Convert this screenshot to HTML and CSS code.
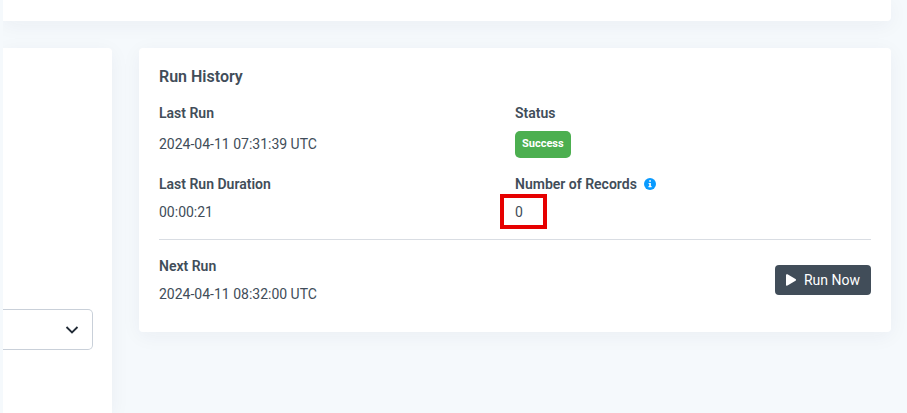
FILE: index.html
```html
<!DOCTYPE html>
<html lang="en">

	<head>
		<meta charset="UTF-8">
		<title>Run History</title>
		<link rel="stylesheet" href="styles.css">
	</head>

	<body>
		<main class="page">
			<div class="card top-card"></div>

			<div class="columns">
				<!-- settings -->
				<div class="card side-card">
					<div class="select-wrap">
						<select class="select" aria-label="Schedule">
							<option></option>
						</select>
						<svg class="chevron" width="14" height="8" viewBox="0 0 14 8" aria-hidden="true">
							<path d="M1.500 1 7 6.500 12.500 1" fill="none" stroke="#212b36" stroke-width="1.800" />
						</svg>
					</div>
				</div>

				<!-- run history -->
				<section class="card history">
					<h2 class="title">Run History</h2>
					<dl class="grid">
						<div class="item">
							<dt>Last Run</dt>
							<dd class="tall">2024-04-11 07:31:39 UTC</dd>
						</div>
						<div class="item">
							<dt>Status</dt>
							<dd class="tall"><span class="badge">Success</span></dd>
						</div>
						<div class="item">
							<dt>Last Run Duration</dt>
							<dd>00:00:21</dd>
						</div>
						<div class="item">
							<dt>Number of Records
								<svg class="info" width="12" height="12" viewBox="0 0 12 12" aria-hidden="true">
									<circle cx="6" cy="6" r="6" fill="#0a9bff" />
									<path d="M5.200 2.300h1.700v1.500H5.200zM4.600 4.900h2.300v3.200h.7v1.100H4.500V8.100h.7V6h-.6z" fill="#fff" />
								</svg>
							</dt>
							<dd><span class="marked">0</span></dd>
						</div>
					</dl>
					<div class="footer">
						<dl class="item">
							<dt>Next Run</dt>
							<dd>2024-04-11 08:32:00 UTC</dd>
						</dl>
						<button class="btn" type="button">
							<svg width="10" height="12" viewBox="0 0 10 12" aria-hidden="true">
								<path d="M0 1.200C0 .3.800-.1 1.500.300l8 4.800c.7.400.7 1.300 0 1.700l-8 4.800C.8 12 0 11.600 0 10.800z" fill="#fff" />
							</svg>
							Run Now
						</button>
					</div>
				</section>
			</div>
		</main>
	</body>

</html>
```
FILE: styles.css
```css
* {
	margin: 0;
	padding: 0;
	box-sizing: border-box;
}

body {
	background: #f5f9fc;
	color: #414d59;
	font: 14px/20px Roboto, "Liberation Sans", sans-serif;
}

.page {
	display: flex;
	flex-direction: column;
	gap: 27px;
	height: 100vh;
	margin-left: 3px;
	padding-right: 16px;
	overflow: hidden;
}

.card {
	background: #fff;
	border-radius: 4px;
	box-shadow: 0 4px 20px rgba(34, 41, 80, 0.05);
}

.top-card {
	flex: none;
	height: 21px;
	border-radius: 0 0 4px 0;
}

.columns {
	flex: 1;
	display: flex;
	gap: 27px;
}

.side-card {
	flex: 0 0 109px;
	padding: 261px 19px 0 0;
	border-radius: 0 4px 0 0;
}

.select-wrap {
	position: relative;
}

.select {
	display: block;
	width: 100%;
	height: 41px;
	appearance: none;
	background: #fff;
	border: 1px solid #c9d0d9;
	border-left: 0;
	border-radius: 0 5px 5px 0;
}

/* sits over the select */
.chevron {
	position: absolute;
	top: 17px;
	right: 14px;
	pointer-events: none;
}

.history {
	flex: 1;
	align-self: flex-start;
	padding: 17px 20px 28px;
}

.title {
	margin-bottom: 14px;
	font-size: 16px;
	line-height: 24px;
	font-weight: 600;
}

.grid {
	display: grid;
	grid-template-columns: 1fr 1fr;
	row-gap: 16px;
	padding-bottom: 17px;
	border-bottom: 1px solid #d9dde3;
}

.item dt {
	display: flex;
	align-items: center;
	gap: 7px;
	margin-bottom: 8px;
	font-weight: 600;
}

.item .tall {
	display: flex;
	height: 27px;
	line-height: 26px;
}

.badge {
	padding: 0 7px;
	background: #4caf50;
	border-radius: 5px;
	color: #fff;
	font-size: 11px;
	font-weight: 700;
}

.marked {
	position: relative;
}

/* red frame around the value */
.marked::after {
	content: "";
	position: absolute;
	box-sizing: border-box;
	top: -10px;
	left: -15px;
	width: 47px;
	height: 35px;
	border: 4px solid #e60000;
}

.footer {
	display: flex;
	justify-content: space-between;
	align-items: center;
	padding-top: 16px;
}

.btn {
	display: flex;
	align-items: center;
	gap: 8px;
	height: 30px;
	padding: 0 11px;
	background: #414d59;
	border: 0;
	border-radius: 4px;
	color: #fff;
	font: inherit;
}
```
